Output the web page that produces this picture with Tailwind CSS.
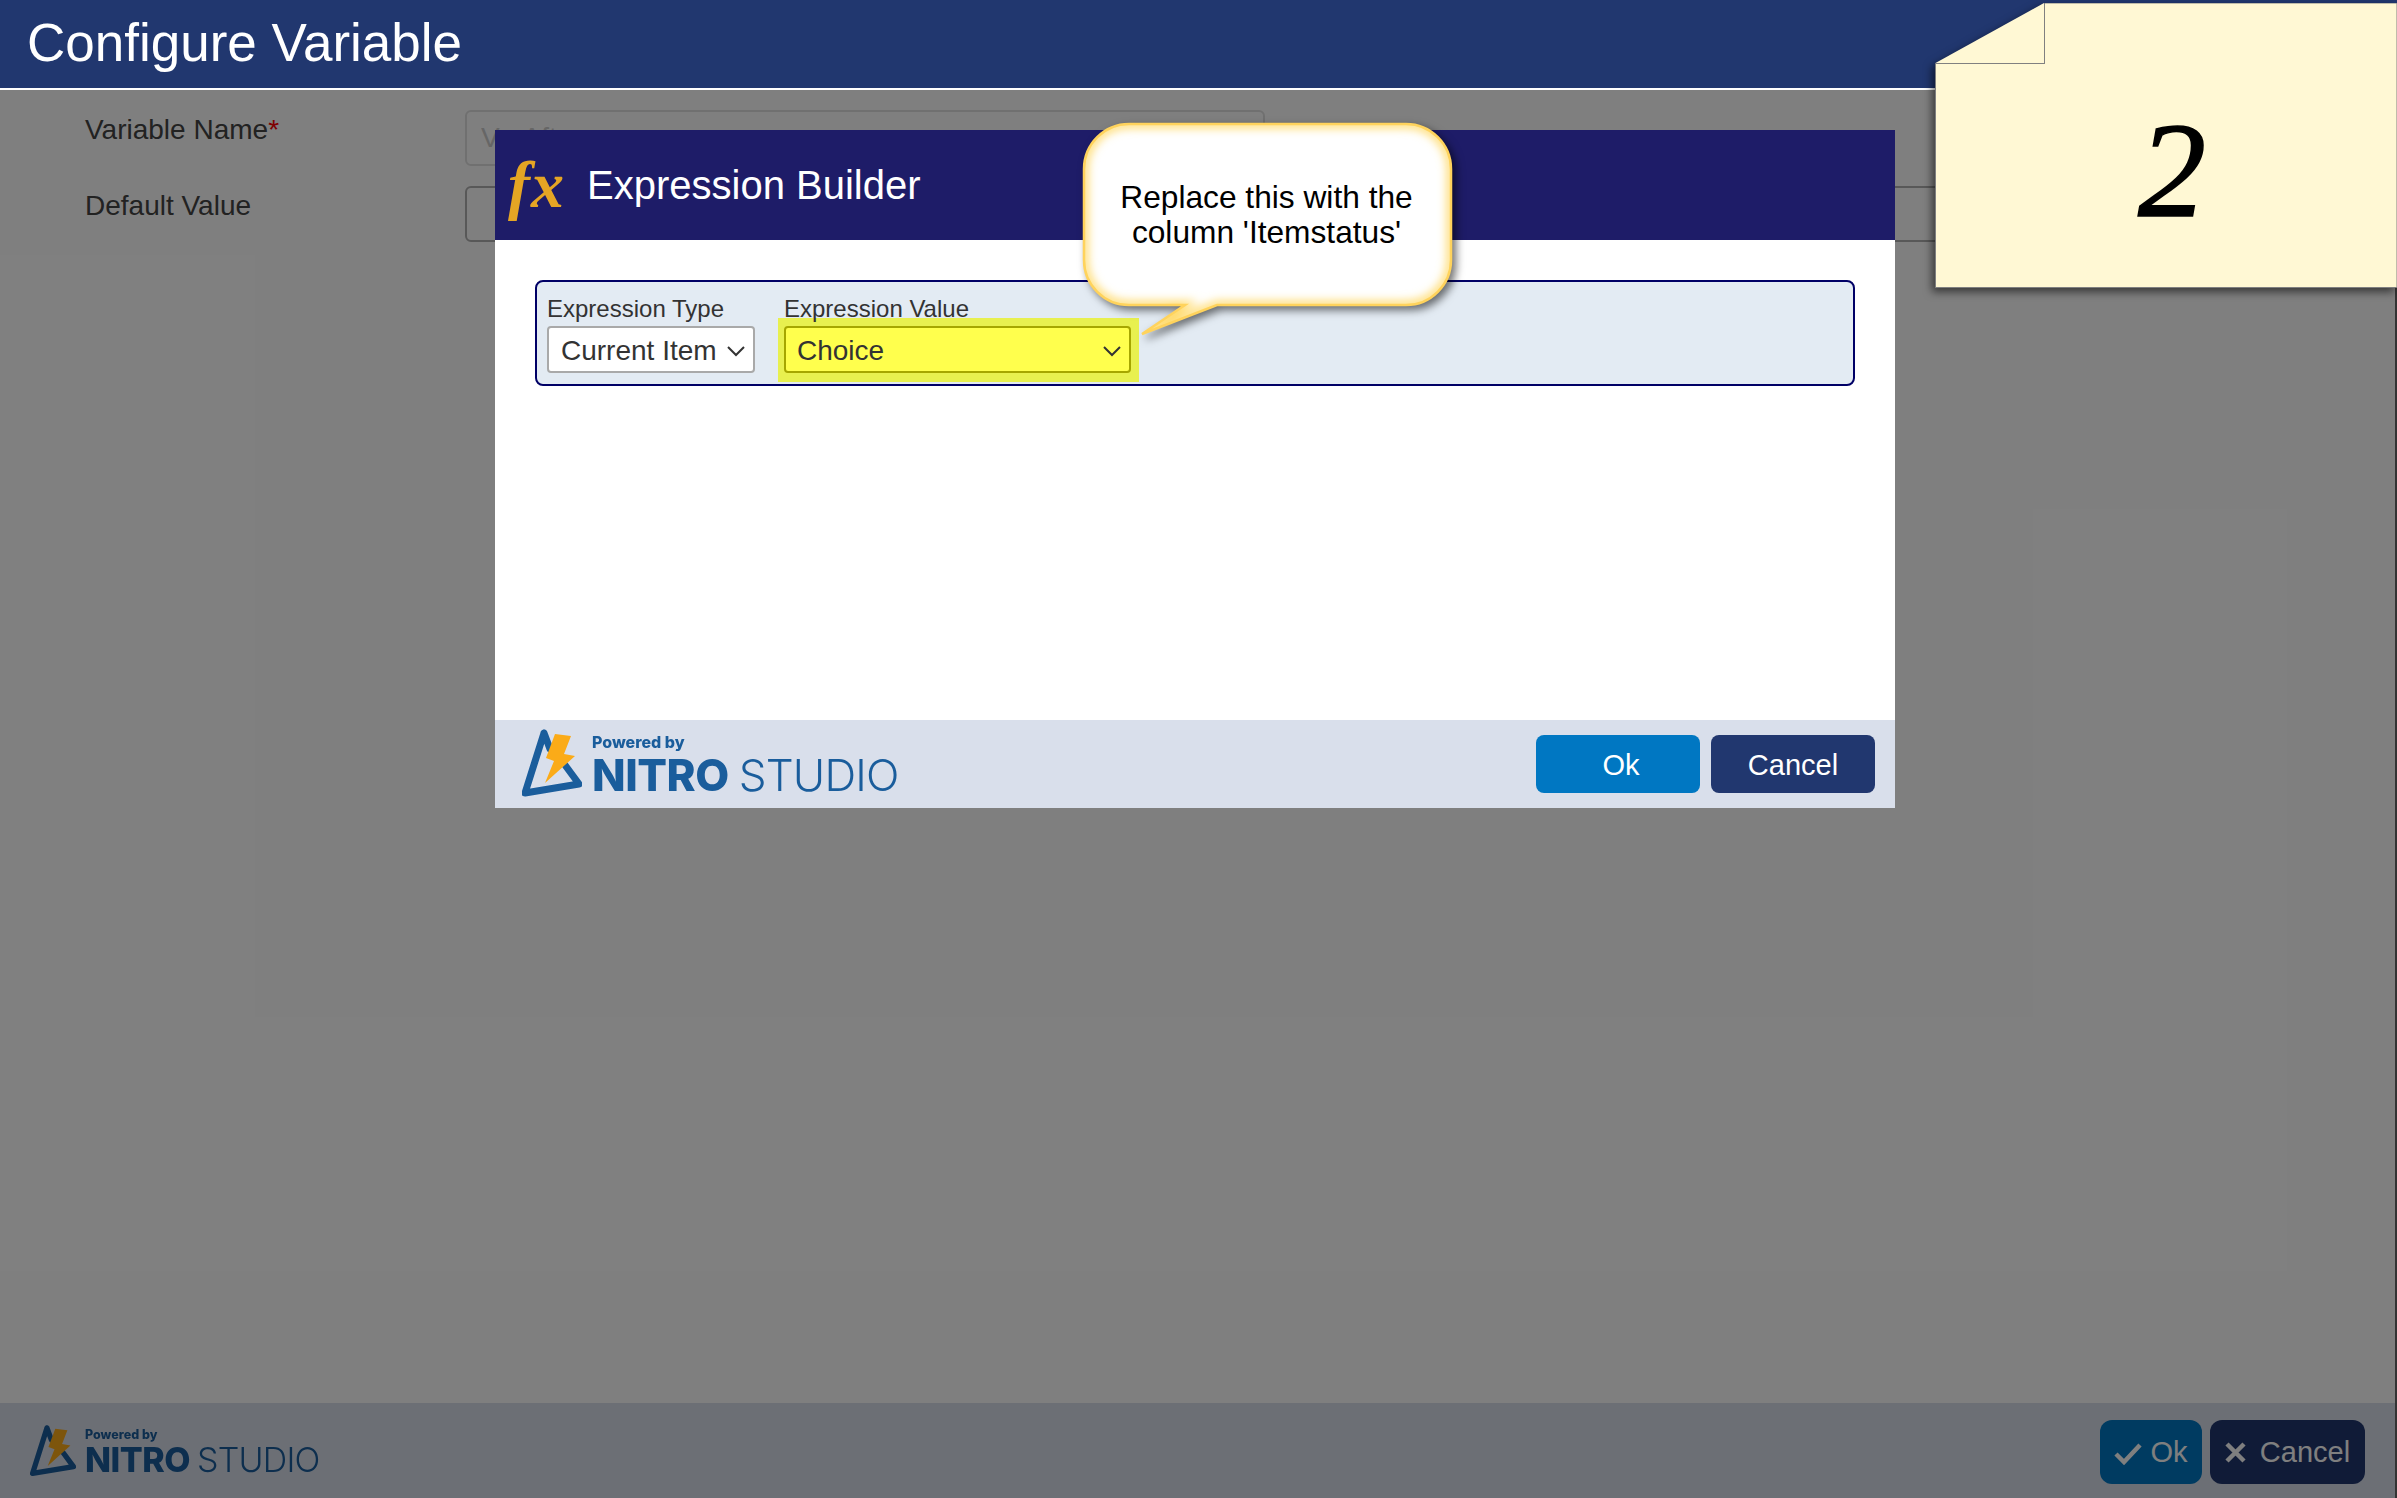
<!DOCTYPE html>
<html lang="en">
<head>
    <meta charset="UTF-8">
    <title>Configure Variable</title>
    <script src="https://cdn.jsdelivr.net/npm/@tailwindcss/browser@4"></script>
</head>
<body class="bg-white font-['Liberation_Sans',sans-serif]">
<div class="relative w-[2397px] h-[1498px] overflow-hidden flex flex-col">

    <!-- Page header sits above the overlay -->
    <header class="relative z-20 h-[90px] shrink-0 border-b-2 border-white bg-[#21376f] pl-[27px] flex items-center">
        <h1 class="text-white text-[53px] leading-none pb-1">Configure Variable</h1>
    </header>

    <!-- Page behind the dialog -->
    <div class="flex-1 flex flex-col border-r-2 border-[#666666]">
        <main class="flex-1 pl-[85px] pt-[20px] text-[#444444]">
            <div class="flex h-[76px]">
                <label class="w-[380px] text-[28px] leading-[40px]">Variable Name<span class="text-[#ff0000]">*</span></label>
                <input class="w-[800px] h-[56px] rounded-md border-2 border-[#e0e0e0] px-[14px] text-[28px] text-[#cccccc]" value="VarAfter" disabled>
            </div>
            <div class="flex">
                <label class="w-[380px] text-[28px] leading-[40px]">Default Value</label>
                <input class="w-[1600px] h-[56px] rounded-md border-2 border-[#b0b0b0] px-4 text-[28px]">
            </div>
        </main>
        <footer class="h-[95px] bg-[#d9dfeb] pl-[30px] pr-[30px] flex items-center justify-between">
            <div class="flex items-start gap-[9px] pt-[2px] blur-[0.4px]">
                <svg class="w-[46px] h-[53px]" viewBox="0 0 60 70" fill="none">
                    <path d="M22 4 L3 64 L57 55 L43 36 M22 4 L28 20" stroke="#1a5d9c" stroke-width="7" stroke-linejoin="round" stroke-linecap="round"/>
                    <path d="M33 5 L49 7 L42 25 L53 27 L23 54 L32 32 L24 29 Z" fill="#fbab18"/>
                </svg>
                <div class="font-['Inter',sans-serif] text-[#1a5d9c] pt-[3px]">
                    <div class="text-[12.5px] leading-[14px] font-extrabold">Powered by</div>
                    <div class="flex gap-[7px] text-[34px] leading-[36px] tracking-[-0.5px]">
                        <span class="font-extrabold">NITRO</span><span class="font-light tracking-[-0.8px]">STUDIO</span>
                    </div>
                </div>
            </div>
            <div class="flex gap-[8px] text-white text-[29px] mt-[2px]">
                <button class="h-[64px] w-[102px] rounded-xl bg-[#0077c2] flex items-center justify-center gap-[8px] pt-[2px]">
                    <svg class="w-[28px] h-[24px]" viewBox="0 0 28 24" fill="none"><path d="M2 13 L10 21 L26 4" stroke="white" stroke-width="4.5"/></svg>
                    Ok
                </button>
                <button class="h-[64px] w-[155px] rounded-xl bg-[#21376f] flex items-center justify-center gap-[14px] pt-[2px]">
                    <svg class="w-[21px] h-[21px]" viewBox="0 0 21 21" fill="none"><path d="M2 2 L19 19 M19 2 L2 19" stroke="white" stroke-width="4.5"/></svg>
                    Cancel
                </button>
            </div>
        </footer>
    </div>

    <!-- Modal overlay -->
    <div class="absolute inset-0 z-10 bg-black/50"></div>

    <!-- Expression Builder dialog -->
    <div class="absolute z-20 left-[495px] top-[130px] w-[1400px] h-[678px] bg-white flex flex-col">
        <div class="h-[110px] bg-[#1e1c68] flex items-center pl-[13px]">
            <span class="w-[79px] text-[#e5a524] text-[66px] leading-none italic font-bold tracking-[1px] font-['Liberation_Serif',serif]">fx</span>
            <h2 class="text-white text-[40px] leading-none">Expression Builder</h2>
        </div>
        <div class="flex-1 px-[40px] pt-[40px]">
            <div class="h-[106px] rounded-lg border-2 border-[#000066] bg-[#e3ebf3] pl-[10px] pt-[12px] flex gap-[29px] text-[#333333]">
                <div>
                    <div class="text-[24px] leading-[30px]">Expression Type</div>
                    <div class="mt-[2px] w-[208px] h-[47px] rounded border-2 border-[#a9a9a9] bg-white pl-[12px] pr-[8px] pt-[2px] flex items-center justify-between text-[28px]">
                        Current Item
                        <svg class="w-[18px] h-[12px]" viewBox="0 0 18 12" fill="none"><path d="M1 2 L9 10 L17 2" stroke="#333333" stroke-width="2"/></svg>
                    </div>
                </div>
                <div>
                    <div class="relative z-10 text-[24px] leading-[30px]">Expression Value</div>
                    <!-- square highlight drawn round the field -->
                    <div class="mt-[-6px] ml-[-6px] mr-[-8px] bg-[#e8f04f] pl-[6px] pr-[8px] pt-[8px] pb-[9px]">
                        <div class="w-[347px] h-[47px] rounded border-2 border-[#a6a600] bg-[#ffff4d] pl-[11px] pr-[8px] pt-[2px] flex items-center justify-between text-[28px]">
                            Choice
                            <svg class="w-[18px] h-[12px]" viewBox="0 0 18 12" fill="none"><path d="M1 2 L9 10 L17 2" stroke="#333333" stroke-width="2"/></svg>
                        </div>
                    </div>
                </div>
            </div>
        </div>
        <div class="h-[88px] bg-[#d9dfeb] pl-[27px] pr-[20px] flex items-center justify-between">
            <div class="flex items-start gap-[10px] blur-[0.4px]">
                <svg class="w-[60px] h-[70px]" viewBox="0 0 60 70" fill="none">
                    <path d="M22 4 L3 64 L57 55 L43 36 M22 4 L28 20" stroke="#1a5d9c" stroke-width="7" stroke-linejoin="round" stroke-linecap="round"/>
                    <path d="M33 5 L49 7 L42 25 L53 27 L23 54 L32 32 L24 29 Z" fill="#fbab18"/>
                </svg>
                <div class="font-['Inter',sans-serif] text-[#1a5d9c] pt-[3px]">
                    <div class="text-[16px] leading-[20px] font-extrabold">Powered by</div>
                    <div class="flex gap-[10px] text-[44px] leading-[46px] tracking-[-0.5px]">
                        <span class="font-extrabold">NITRO</span><span class="font-light tracking-[-0.8px]">STUDIO</span>
                    </div>
                </div>
            </div>
            <div class="flex gap-[11px] text-white text-[29px]">
                <button class="w-[164px] h-[58px] rounded-lg bg-[#0077c2] pl-[6px] pt-[3px]">Ok</button>
                <button class="w-[164px] h-[58px] rounded-lg bg-[#21376f] pt-[3px]">Cancel</button>
            </div>
        </div>
    </div>

    <!-- Callout over the dialog -->
    <div class="absolute z-30 left-[1070px] top-[110px] w-[400px] h-[240px]">
        <svg class="absolute inset-0 drop-shadow-[4px_4px_4px_rgba(0,0,0,0.55)]" width="400" height="240" viewBox="0 0 400 240">
            <defs>
                <clipPath id="callout-clip">
                    <path d="M59 14 H336 A45 45 0 0 1 381 59 V150 A45 45 0 0 1 336 195 H147 L72 224 L115 195 H59 A45 45 0 0 1 14 150 V59 A45 45 0 0 1 59 14 Z"/>
                </clipPath>
                <filter id="callout-glow"><feGaussianBlur stdDeviation="5"/></filter>
            </defs>
            <path d="M59 14 H336 A45 45 0 0 1 381 59 V150 A45 45 0 0 1 336 195 H147 L72 224 L115 195 H59 A45 45 0 0 1 14 150 V59 A45 45 0 0 1 59 14 Z" fill="white"/>
            <g clip-path="url(#callout-clip)">
                <path d="M59 14 H336 A45 45 0 0 1 381 59 V150 A45 45 0 0 1 336 195 H147 L72 224 L115 195 H59 A45 45 0 0 1 14 150 V59 A45 45 0 0 1 59 14 Z" fill="none" stroke="#ffd966" stroke-width="8" filter="url(#callout-glow)"/>
            </g>
            <path d="M59 14 H336 A45 45 0 0 1 381 59 V150 A45 45 0 0 1 336 195 H147 L72 224 L115 195 H59 A45 45 0 0 1 14 150 V59 A45 45 0 0 1 59 14 Z" fill="none" stroke="#ffd35c" stroke-width="2.5"/>
        </svg>
        <p class="absolute left-[12px] top-[70px] w-[369px] text-center text-black text-[31.7px] leading-[35px]">Replace this with the<br>column 'Itemstatus'</p>
    </div>

    <!-- Step note -->
    <div class="absolute z-30 left-[1935px] top-[3px] w-[462px] h-[285px] flex items-center justify-center">
        <svg class="absolute inset-0 drop-shadow-[-3px_4px_4px_rgba(0,0,0,0.55)]" width="462" height="285" viewBox="0 0 462 285">
            <path d="M0.5 60.5 H109.5 V0 H462 V284.5 H0.5 Z" fill="#fff8d4" stroke="#808080"/>
            <path d="M0.5 60 L109 0 V60 Z" fill="#fff8d4"/>
            <path d="M0.5 60.5 H109.5 V0" fill="none" stroke="#808080"/>
        </svg>
        <span class="relative text-black text-[136px] leading-none italic font-['Liberation_Serif',serif] [-webkit-text-stroke:1.5px_black] pl-[12px] pt-[48px]">2</span>
    </div>
</div>
</body>
</html>
